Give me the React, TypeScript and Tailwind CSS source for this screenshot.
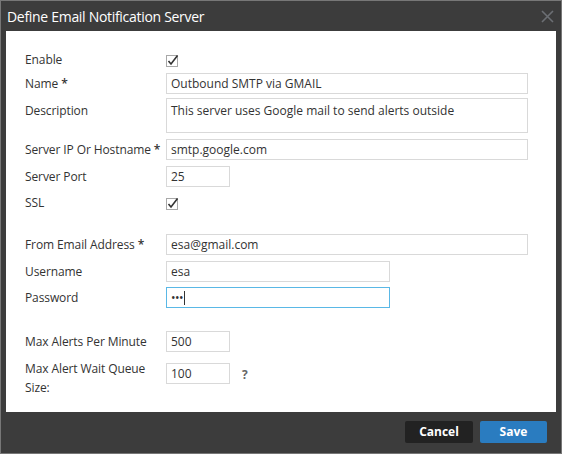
import React from 'react';

const font = { fontFamily: '"Open Sans", "Liberation Sans", sans-serif' };

const Check: React.FC = () => (
  <svg width="14" height="13" viewBox="0 0 14 13" className="block">
    <rect x="0.5" y="1.5" width="11" height="11" fill="#fff" stroke="#a8a8a8" />
    <path d="M2.5 7 L5 10 L11.5 1.5" fill="none" stroke="#333" strokeWidth="1.6" />
  </svg>
);

const Label: React.FC<{ children: React.ReactNode; req?: boolean }> = ({ children, req }) => (
  <div className="w-[141px] shrink-0 text-[12px] text-[#333] tracking-[-0.1px]">
    {children}
    {req && <span className="ml-[3px] font-semibold">*</span>}
  </div>
);

const Input: React.FC<{ value: string; w: string; focus?: boolean }> = ({ value, w, focus }) => (
  <div
    className={`${w} h-[21px] flex items-center pl-[4px] text-[12px] text-[#333] border ${
      focus ? 'border-[#5ab8e6]' : 'border-[#d9d9d9]'
    }`}
  >
    {value}
  </div>
);

const App: React.FC = () => {
  return (
    <div className="w-[562px] h-[454px] bg-[#3c3c3c] border border-[#777] flex flex-col" style={font}>
      {/* Title */}
      <div className="h-[30px] shrink-0 flex items-center justify-between pl-[6px] pr-[7px]">
        <span className="text-[14px] text-white tracking-[-0.3px]">Define Email Notification Server</span>
        <svg width="13" height="13" viewBox="0 0 13 13">
          <path d="M1 1 L12 12 M12 1 L1 12" stroke="#6c6f74" strokeWidth="1.6" />
        </svg>
      </div>

      {/* Body */}
      <div className="mx-[5px] h-[381px] shrink-0 bg-white pl-[19px] pt-[19px]">
        <div className="flex items-center h-[20px]">
          <Label>Enable</Label>
          <Check />
        </div>
        <div className="flex items-center h-[21px] mt-[3px]">
          <Label req>Name</Label>
          <Input value="Outbound SMTP via GMAIL" w="w-[362px]" />
        </div>
        <div className="flex items-start h-[35px] mt-[4px]">
          <div className="pt-[4px]">
            <Label>Description</Label>
          </div>
          <div className="w-[362px] h-[35px] pl-[4px] pt-[3px] text-[12px] text-[#333] border border-[#d9d9d9]">
            This server uses Google mail to send alerts outside
          </div>
        </div>
        <div className="flex items-center h-[21px] mt-[6px]">
          <Label req>Server IP Or Hostname</Label>
          <Input value="smtp.google.com" w="w-[362px]" />
        </div>
        <div className="flex items-center h-[21px] mt-[6px]">
          <Label>Server Port</Label>
          <Input value="25" w="w-[64px]" />
        </div>
        <div className="flex items-center h-[20px] mt-[6px]">
          <Label>SSL</Label>
          <Check />
        </div>

        <div className="flex items-center h-[21px] mt-[21px]">
          <Label req>From Email Address</Label>
          <Input value="esa@gmail.com" w="w-[362px]" />
        </div>
        <div className="flex items-center h-[21px] mt-[6px]">
          <Label>Username</Label>
          <Input value="esa" w="w-[224px]" />
        </div>
        <div className="flex items-center h-[21px] mt-[5px]">
          <Label>Password</Label>
          <div className="w-[224px] h-[21px] flex items-center pl-[4px] border border-[#5ab8e6]">
            <span className="text-[12px] text-[#333] tracking-[-0.5px] leading-none">•••</span>
            <span className="ml-[1px] w-px h-[14px] bg-[#333]" />
          </div>
        </div>

        <div className="flex items-center h-[21px] mt-[23px]">
          <Label>Max Alerts Per Minute</Label>
          <Input value="500" w="w-[64px]" />
        </div>
        <div className="flex items-start h-[21px] mt-[11px]">
          <div className="w-[141px] shrink-0 text-[12px] leading-[19px] text-[#333] tracking-[-0.1px] -mt-[4px]">
            Max Alert Wait Queue
            <br />
            Size:
          </div>
          <Input value="100" w="w-[64px]" />
          <span className="ml-[12px] mt-[3px] text-[12px] font-bold text-[#666]">?</span>
        </div>
      </div>

      {/* Footer */}
      <div className="flex-1 flex items-start justify-end gap-[7px] pt-[9px] pr-[14px]">
        <button className="w-[68px] h-[22px] bg-[#222] text-white text-[12px] font-bold rounded-[2px]">
          Cancel
        </button>
        <button className="w-[67px] h-[22px] bg-[#2a7cc0] text-white text-[12px] font-bold rounded-[2px]">
          Save
        </button>
      </div>
    </div>
  );
};

export default App;
